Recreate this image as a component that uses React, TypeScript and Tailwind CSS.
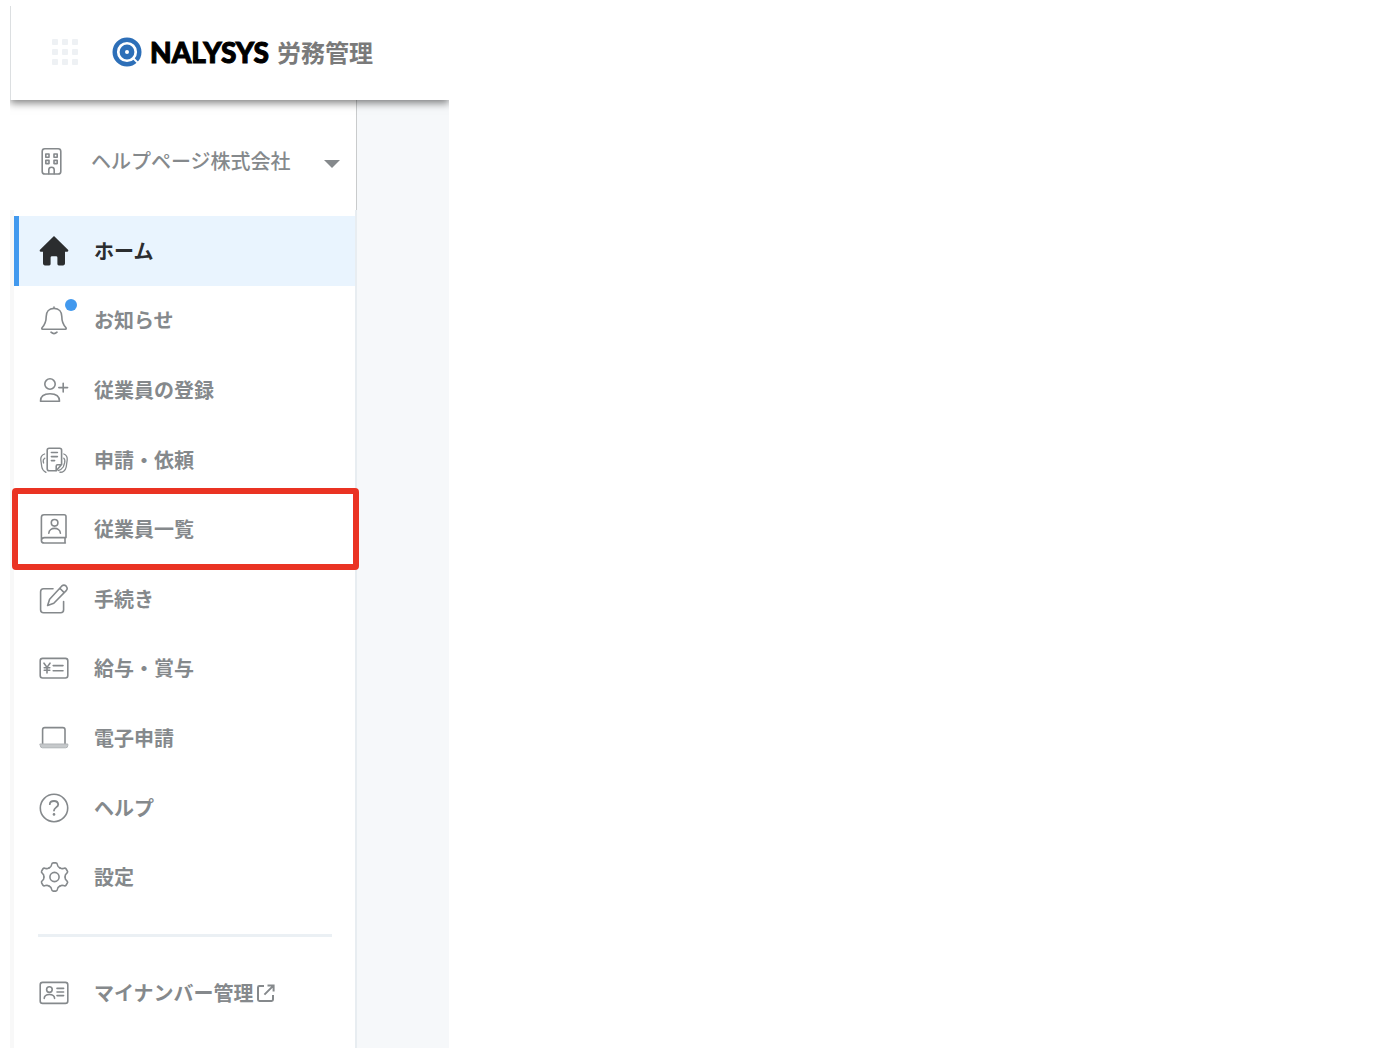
import React from 'react';

interface IconProps {
  children: React.ReactNode;
}

const Icon: React.FC<IconProps> = ({ children }) => (
  <svg
    className="size-[30px] shrink-0"
    viewBox="0 0 30 30"
    fill="none"
    stroke="currentColor"
    strokeWidth="1.6"
    strokeLinecap="round"
    strokeLinejoin="round"
    aria-hidden="true"
  >
    {children}
  </svg>
);

const HomeIcon = () => (
  <Icon>
    <path
      d="M15 0 29 13.800Q30 15.600 28 15.800H26V27.600Q26 29.400 24.200 29.400H19.800Q18.400 29.400 18.400 28V21.600Q18.400 20.200 17 20.200H13Q11.600 20.200 11.600 21.600V28Q11.600 29.400 10.200 29.400H5.800Q4 29.400 4 27.600V15.800H2Q0 15.600 1 13.800Z"
      fill="currentColor"
      stroke="none"
    />
  </Icon>
);

const BellIcon = () => (
  <Icon>
    <path d="M15 2V3.400M15 3.400C9.800 3.400 7.200 7 7.200 11.500C7.200 17.500 5.500 20 3.200 22.500Q2.200 24.200 3.600 24.200H26.400Q27.800 24.200 26.800 22.500C24.500 20 22.800 17.500 22.800 11.500C22.800 7 20.200 3.400 15 3.400Z" />
    <path d="M12 27.200Q15 30 18 27.200" />
  </Icon>
);

const PersonAddIcon = () => (
  <Icon>
    <circle cx="11" cy="9" r="5.200" />
    <path d="M1.500 26.200C1.500 20.600 5 18.800 11 18.800S20.500 20.600 20.500 26.200Z" />
    <path d="M24.200 8.200V17M19.800 12.600H28.600" />
  </Icon>
);

const DocumentsIcon = () => (
  <Icon>
    <path d="M17.200 25.800H10.200Q8.200 25.800 8.200 23.800V5.200Q8.200 3.200 10.200 3.200H20.600Q22.600 3.200 22.600 5.200V19.500M17.200 25.800 22.600 19.500M17.200 25.800V21.200Q17.200 19.800 18.600 19.800H22.400" />
    <path d="M12.400 7.500H18.400M12.400 11.600H18.400M12.400 15.600H15.600" />
    <path
      d="M5.600 9C2.500 10 1.500 12 1.800 15L2.800 22Q3.300 25.500 7 27.300M5.800 13.200 4.400 14.600Q3.900 16 4.600 18M24.800 9C27.600 10 28.500 12 28.200 15L27.200 22C26.500 25.800 23.500 27.600 20.800 27.200M24.800 13.200Q26.400 14.500 25.600 18L24.200 22Q22.500 24.600 19.200 25.600"
      strokeWidth="1.300"
    />
  </Icon>
);

const RosterIcon = () => (
  <Icon>
    <path d="M5 .8H25.200Q27 .8 27 2.600V23.600H5.600Q2.400 23.600 2.400 26.400Q2.400 29 5.200 29H26.400M2.400 26.400V3.400Q2.400 .8 5 .8M26 23.600V29" />
    <circle cx="15.600" cy="8.800" r="3.300" />
    <path d="M9.800 19.200C10.200 12.800 21 12.800 21.400 19.200" />
  </Icon>
);

const EditIcon = () => (
  <Icon>
    <path d="M14 4.800H4.600Q1.600 4.800 1.600 7.800V25.800Q1.600 28.800 4.600 28.800H21.600Q24.600 28.800 24.600 25.800V17.500" />
    <path d="M8.600 21.400 10.600 15.200 22.600 2.200Q25 .2 27.200 2.200Q29.200 4.600 27.200 6.600L14.800 19.200ZM20.800 4.200 25.200 8.600" />
  </Icon>
);

const PayIcon = () => (
  <Icon>
    <rect x="1.200" y="5.400" width="27.600" height="19.600" rx="2.400" />
    <path d="M5 10.200 8 14.400 11 10.200M8 14.400V20M5.200 14.800H10.800M5.200 17.200H10.800M14.200 12.600H24M14.200 17.800H24" />
  </Icon>
);

const LaptopIcon = () => (
  <Icon>
    <path d="M3.600 21V6.800Q3.600 4.600 5.800 4.600H23.800Q26 4.600 26 6.800V21" />
    <path
      d="M1.200 21H28.800V22.600Q28.800 24.800 26.600 24.800H3.400Q1.200 24.800 1.200 22.600Z"
      fill="#c6c9cb"
      stroke="#b0b4b7"
      strokeWidth="1"
    />
  </Icon>
);

const HelpIcon = () => (
  <Icon>
    <circle cx="15" cy="15" r="13.700" />
    <path d="M10.800 11.200Q11 8 15 8T19.200 11.400C19.200 14.400 15 14.400 15 17.600" strokeWidth="1.800" />
    <circle cx="15" cy="21.400" r="1.300" fill="currentColor" stroke="none" />
  </Icon>
);

const GearIcon = () => (
  <Icon>
    <g transform="translate(15.500 15)">
      {[0, 60, 120, 180, 240, 300].map((angle) => (
        <path
          key={angle}
          transform={`rotate(${angle})`}
          d="M-5.300-9.200C-4-9.950-3.300-10-3-12Q-2.700-14.100-1.400-14.100H1.400Q2.700-14.100 3-12C3.300-10 4-9.950 5.300-9.200"
        />
      ))}
      <circle r="4.600" />
    </g>
  </Icon>
);

const IdCardIcon = () => (
  <Icon>
    <rect x="1.200" y="4.400" width="27.600" height="21" rx="2.400" />
    <circle cx="10.400" cy="11.600" r="2.800" />
    <path d="M5.200 20.400C5.600 15.200 15.200 15.200 15.600 20.400M18 10.400H24.600M18 14H24.600M18 17.600H24.600" />
  </Icon>
);

const BuildingIcon = () => (
  <Icon>
    <rect x="3.200" y="2.800" width="18.600" height="25.200" rx="2.600" />
    <path d="M6.800 8H10V11.200H6.800ZM15 8H18.200V11.200H15ZM6.800 14.400H10V17.600H6.800ZM15 14.400H18.200V17.600H15ZM9.800 27.800V23.800Q9.800 21.200 12.500 21.200T15.200 23.800V27.800" />
  </Icon>
);

const ExternalIcon = () => (
  <svg
    className="size-5 shrink-0"
    viewBox="0 0 20 20"
    fill="none"
    stroke="currentColor"
    strokeWidth="2"
    aria-hidden="true"
  >
    <path d="M8 3H3.400Q2 3 2 4.400V16.600Q2 18 3.400 18H15.600Q17 18 17 16.600V12M11.500 2.400H17.600V8.500M17.400 2.600 8.400 11.600" />
  </svg>
);

const Logo = () => (
  <svg className="size-[30px] shrink-0" viewBox="0 0 30 30" aria-hidden="true">
    <circle cx="15" cy="15" r="12.300" fill="none" stroke="#2d6fb8" strokeWidth="4.400" />
    <circle cx="15" cy="15" r="4.700" fill="none" stroke="#2d6fb8" strokeWidth="5.400" />
    <path d="M21 21 28 28" stroke="#fff" strokeWidth="1.800" />
  </svg>
);

interface NavItem {
  label: string;
  icon: React.FC;
  active?: boolean;
  badge?: boolean;
  highlighted?: boolean;
}

const navItems: NavItem[] = [
  { label: 'ホーム', icon: HomeIcon, active: true },
  { label: 'お知らせ', icon: BellIcon, badge: true },
  { label: '従業員の登録', icon: PersonAddIcon },
  { label: '申請・依頼', icon: DocumentsIcon },
  { label: '従業員一覧', icon: RosterIcon, highlighted: true },
  { label: '手続き', icon: EditIcon },
  { label: '給与・賞与', icon: PayIcon },
  { label: '電子申請', icon: LaptopIcon },
  { label: 'ヘルプ', icon: HelpIcon },
  { label: '設定', icon: GearIcon },
];

const NavLink: React.FC<{ item: NavItem }> = ({ item }) => {
  const ItemIcon = item.icon;
  return (
    <a
      href="#"
      aria-current={item.active ? 'page' : undefined}
      className={`relative flex items-center gap-[25px] border-l-[5px] pl-5 ${
        item.active ? 'border-[#4299ee] bg-[#e9f4fe] text-[#2b2d2f]' : 'border-transparent text-[#85898c]'
      }`}
    >
      <span className="relative">
        <ItemIcon />
        {item.badge && <span className="absolute -top-1.5 -right-2 size-3 rounded-full bg-[#4299ee]" />}
      </span>
      <span>{item.label}</span>
      {item.highlighted && (
        <span className="pointer-events-none absolute -inset-y-1.5 -right-1 -left-[7px] z-10 rounded-sm border-6 border-[#ea3323]" />
      )}
    </a>
  );
};

export default function App() {
  return (
    <div className="min-h-screen bg-white pt-1.5 pl-2.5 font-['Noto_Sans_CJK_JP',sans-serif] text-xl font-medium">
      <div className="flex min-h-[calc(100vh-6px)] max-w-[439px] flex-col overflow-hidden">
        <header className="relative z-10 flex h-[94px] items-center border-l border-[#dcdfe1] bg-white pb-0.5 pl-[41px] shadow-[0_3px_8px_rgba(0,0,0,0.5)]">
          <button type="button" aria-label="アプリ一覧" className="grid grid-cols-3 gap-1">
            {Array.from({ length: 9 }, (_, i) => (
              <span key={i} className="size-1.5 rounded-[1px] bg-[#eef1f4]" />
            ))}
          </button>
          <a href="#" className="ml-[34px] flex items-center gap-2">
            <Logo />
            <span className="font-[Lato,sans-serif] text-[28px] leading-8 font-black text-black [-webkit-text-stroke:1px_black]">
              NALYSYS
            </span>
            <span className="text-2xl leading-8 font-bold text-[#7a7a7a]">労務管理</span>
          </a>
        </header>

        <div className="flex flex-1">
          <aside className="flex w-[347px] shrink-0 flex-col">
            <button
              type="button"
              className="flex h-[110px] items-center border-r border-[#c9cbcc] pt-3 pr-4 pl-[29px] text-[#85898c]"
            >
              <BuildingIcon />
              <span className="ml-[22px]">ヘルプページ株式会社</span>
              <svg className="mt-1.5 ml-auto h-2 w-4" viewBox="0 0 16 8" fill="currentColor" aria-hidden="true">
                <path d="M0 0H16L8 8Z" />
              </svg>
            </button>

            <nav className="flex-1 border-r-2 border-l-4 border-r-[#e8edf1] border-l-[#f8f8f8] pt-1.5 font-bold">
              <div className="grid min-h-[696px] auto-rows-fr">
                {navItems.map((item) => (
                  <NavLink key={item.label} item={item} />
                ))}
              </div>
              <hr className="mt-[22px] mr-[23px] ml-6 border-t-3 border-[#ebf0f4]" />
              <a href="#" className="mt-[21px] flex h-[70px] items-center pl-[25px] text-[#85898c]">
                <IdCardIcon />
                <span className="mr-0.5 ml-[25px]">マイナンバー管理</span>
                <ExternalIcon />
              </a>
            </nav>
          </aside>
          <main className="flex-1 bg-[#f6f8fa]" />
        </div>
      </div>
    </div>
  );
}
